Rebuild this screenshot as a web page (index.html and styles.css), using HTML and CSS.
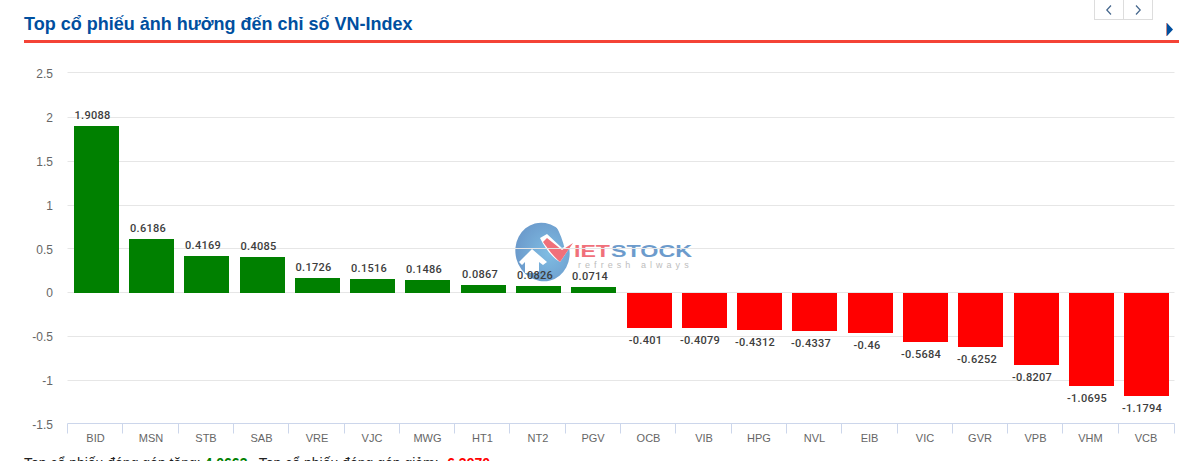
FILE: index.html
```html
<!DOCTYPE html>
<html lang="vi">
<head>
<meta charset="utf-8">
<title>Top cổ phiếu ảnh hưởng đến chỉ số VN-Index</title>
<link rel="stylesheet" href="styles.css">
</head>
<body>
<section class="panel">
  <header class="head">
    <h2 class="title">Top cổ phiếu ảnh hưởng đến chỉ số VN-Index</h2>
    <div class="tools">
      <div class="pager">
        <button class="page-btn" type="button" aria-label="Trước"><svg width="8" height="12" viewBox="0 0 8 12"><path class="chev" d="M6 1.5 1.8 6 6 10.5"/></svg></button>
        <button class="page-btn" type="button" aria-label="Sau"><svg width="8" height="12" viewBox="0 0 8 12"><path class="chev" d="M2 1.5 6.2 6 2 10.5"/></svg></button>
      </div>
      <svg class="more" width="7" height="13" viewBox="0 0 7 13"><path class="more-edge" d="M0 0h1v13H0z"/><path class="more-tri" d="M1 0 7 6.5 1 13z"/></svg>
    </div>
  </header>

  <svg class="chart" width="1179" height="407" viewBox="0 43 1179 407">
    <defs>
      <radialGradient id="globe" cx="0.6" cy="0.55" r="0.6">
        <stop offset="0" stop-color="#7fbde3"/>
        <stop offset="1" stop-color="#6c9bcc"/>
      </radialGradient>
    </defs>

    <g class="logo">
      <ellipse cx="542.5" cy="252" rx="27" ry="29.5" fill="url(#globe)" transform="rotate(-15 542.5 252)"/>
      <path d="M556 226l6-3c4 5 8 12 10 20l-7 7c-2-9-5-17-9-24z" fill="#fff"/>
      <path d="M540 238l7-4 15 14 11-5-13 19c-7-4-14-12-20-24z" fill="#fff"/>
      <path d="M543 242l4-4 15 12 11-7-13 19c-6-5-12-13-17-20z" fill="#f0707a"/>
      <path d="M519 262l13-13 15 13-4 3-4-3v11h-14v-11l-3 3z" fill="#fff"/>
      <text class="logo-name logo-red" x="574" y="257" textLength="36" lengthAdjust="spacingAndGlyphs">IET</text>
      <text class="logo-name logo-blue" x="611" y="257" textLength="81" lengthAdjust="spacingAndGlyphs">STOCK</text>
      <text class="logo-tag" x="578" y="268">refresh always</text>
    </g>

    <g class="grid">
      <path d="M67.5 72.5H1174.5"/>
      <path d="M67.5 117.5H1174.5"/>
      <path d="M67.5 161.5H1174.5"/>
      <path d="M67.5 205.5H1174.5"/>
      <path d="M67.5 248.5H1174.5"/>
      <path d="M67.5 292.5H1174.5"/>
      <path d="M67.5 336.5H1174.5"/>
      <path d="M67.5 380.5H1174.5"/>
    </g>

    <g class="y-labels">
      <text x="53" y="78">2.5</text>
      <text x="53" y="122">2</text>
      <text x="53" y="166">1.5</text>
      <text x="53" y="210">1</text>
      <text x="53" y="254">0.5</text>
      <text x="53" y="297">0</text>
      <text x="53" y="341">-0.5</text>
      <text x="53" y="385">-1</text>
      <text x="53" y="429">-1.5</text>
    </g>

    <g class="up">
      <rect x="74" y="126" width="45" height="167"/>
      <rect x="129" y="239" width="45" height="54"/>
      <rect x="184" y="256" width="45" height="37"/>
      <rect x="240" y="257" width="45" height="36"/>
      <rect x="295" y="278" width="45" height="15"/>
      <rect x="350" y="279" width="45" height="14"/>
      <rect x="405" y="280" width="45" height="13"/>
      <rect x="461" y="285" width="45" height="8"/>
      <rect x="516" y="286" width="45" height="7"/>
      <rect x="571" y="287" width="45" height="6"/>
    </g>
    <g class="down">
      <rect x="627" y="293" width="45" height="35"/>
      <rect x="682" y="293" width="45" height="35"/>
      <rect x="737" y="293" width="45" height="37"/>
      <rect x="792" y="293" width="45" height="38"/>
      <rect x="848" y="293" width="45" height="40"/>
      <rect x="903" y="293" width="45" height="49"/>
      <rect x="958" y="293" width="45" height="54"/>
      <rect x="1014" y="293" width="45" height="72"/>
      <rect x="1069" y="293" width="45" height="93"/>
      <rect x="1124" y="293" width="45" height="103"/>
    </g>

    <g class="values">
      <text x="92.5" y="119">1.9088</text>
      <text x="148" y="232">0.6186</text>
      <text x="203" y="249">0.4169</text>
      <text x="258.5" y="250">0.4085</text>
      <text x="313.5" y="271">0.1726</text>
      <text x="369" y="272">0.1516</text>
      <text x="424" y="273">0.1486</text>
      <text x="480" y="278">0.0867</text>
      <text x="535" y="279">0.0826</text>
      <text x="590" y="280">0.0714</text>
      <text x="645.5" y="344">-0.401</text>
      <text x="700" y="344">-0.4079</text>
      <text x="755" y="346">-0.4312</text>
      <text x="811" y="347">-0.4337</text>
      <text x="867" y="349">-0.46</text>
      <text x="921" y="358">-0.5684</text>
      <text x="977" y="363">-0.6252</text>
      <text x="1032" y="381">-0.8207</text>
      <text x="1087" y="402">-1.0695</text>
      <text x="1142" y="412">-1.1794</text>
    </g>

    <path class="axis" d="M67.5 423.5H1174.5M67.5 423.5v10M122.5 423.5v10M178.5 423.5v10M233.5 423.5v10M288.5 423.5v10M344.5 423.5v10M399.5 423.5v10M454.5 423.5v10M509.5 423.5v10M565.5 423.5v10M620.5 423.5v10M675.5 423.5v10M731.5 423.5v10M786.5 423.5v10M841.5 423.5v10M897.5 423.5v10M952.5 423.5v10M1007.5 423.5v10M1062.5 423.5v10M1118.5 423.5v10M1174.5 423.5v10"/>

    <g class="x-labels">
      <text x="95.5" y="442">BID</text>
      <text x="151" y="442">MSN</text>
      <text x="206" y="442">STB</text>
      <text x="261.5" y="442">SAB</text>
      <text x="317" y="442">VRE</text>
      <text x="372" y="442">VJC</text>
      <text x="427.5" y="442">MWG</text>
      <text x="482.5" y="442">HT1</text>
      <text x="538" y="442">NT2</text>
      <text x="593" y="442">PGV</text>
      <text x="648.5" y="442">OCB</text>
      <text x="704" y="442">VIB</text>
      <text x="759" y="442">HPG</text>
      <text x="814.5" y="442">NVL</text>
      <text x="869.5" y="442">EIB</text>
      <text x="925" y="442">VIC</text>
      <text x="980" y="442">GVR</text>
      <text x="1035.5" y="442">VPB</text>
      <text x="1090.5" y="442">VHM</text>
      <text x="1146" y="442">VCB</text>
    </g>
  </svg>

  <p class="summary">Top cổ phiếu đóng góp tăng: <b class="pos">4.0663</b> . Top cổ phiếu đóng góp giảm: <b class="neg">-6.3970</b></p>
</section>
</body>
</html>
```

FILE: styles.css
```css
html, body {
  margin: 0;
  padding: 0;
  background: #fff;
}

body {
  height: 461px;
  overflow: hidden;
  font-family: "Liberation Sans", Arial, sans-serif;
}

.head {
  display: flex;
  justify-content: space-between;
  align-items: flex-start;
  height: 40px;
  margin-left: 24px;
  border-bottom: 3px solid #f44336;
}

.title {
  margin: 14px 0 0;
  font-size: 18px;
  line-height: 21px;
  font-weight: 700;
  color: #004f9f;
}

.tools {
  display: flex;
  align-items: flex-start;
  padding-right: 6px;
}

.pager {
  display: flex;
  margin-right: 13px;
}

.page-btn {
  display: flex;
  align-items: center;
  justify-content: center;
  width: 30px;
  height: 20px;
  padding: 0;
  background: #fff;
  border: 1px solid #ddd;
  border-top: 0;
}

.page-btn + .page-btn {
  margin-left: -1px;
}

.chev {
  fill: none;
  stroke: #44668c;
  stroke-width: 1.2;
}

.more {
  margin-top: 23px;
  display: block;
}

.more-edge {
  fill: #c98a8a;
}

.more-tri {
  fill: #004f9f;
}

.chart {
  display: block;
}

.grid path {
  stroke: #e6e6e6;
  stroke-width: 1;
  fill: none;
}

.up rect {
  fill: #008000;
}

.down rect {
  fill: #ff0000;
}

.axis {
  stroke: #ccd6eb;
  stroke-width: 1;
  fill: none;
}

.y-labels text {
  font-family: "Liberation Sans", Arial, sans-serif;
  font-size: 12px;
  fill: #666;
  text-anchor: end;
}

.x-labels text {
  font-family: "Liberation Sans", Arial, sans-serif;
  font-size: 11px;
  fill: #666;
  text-anchor: middle;
}

.values text {
  font-family: Roboto, sans-serif;
  font-size: 11px;
  font-weight: 500;
  fill: #3d3d3d;
  text-anchor: middle;
  letter-spacing: 0.25px;
}

.logo-name {
  font-family: "Liberation Sans", Arial, sans-serif;
  font-size: 17px;
  font-weight: 700;
}

.logo-red {
  fill: #f0707a;
}

.logo-blue {
  fill: #6c9bcc;
}

.logo-tag {
  font-family: "Liberation Sans", Arial, sans-serif;
  font-size: 9px;
  letter-spacing: 4.05px;
  fill: #bdbdbd;
}

.summary {
  margin: 6px 0 0 24px;
  font-size: 14px;
  line-height: 15px;
  color: #222;
}

.pos {
  color: #008000;
}

.neg {
  color: #ff0000;
}
```
